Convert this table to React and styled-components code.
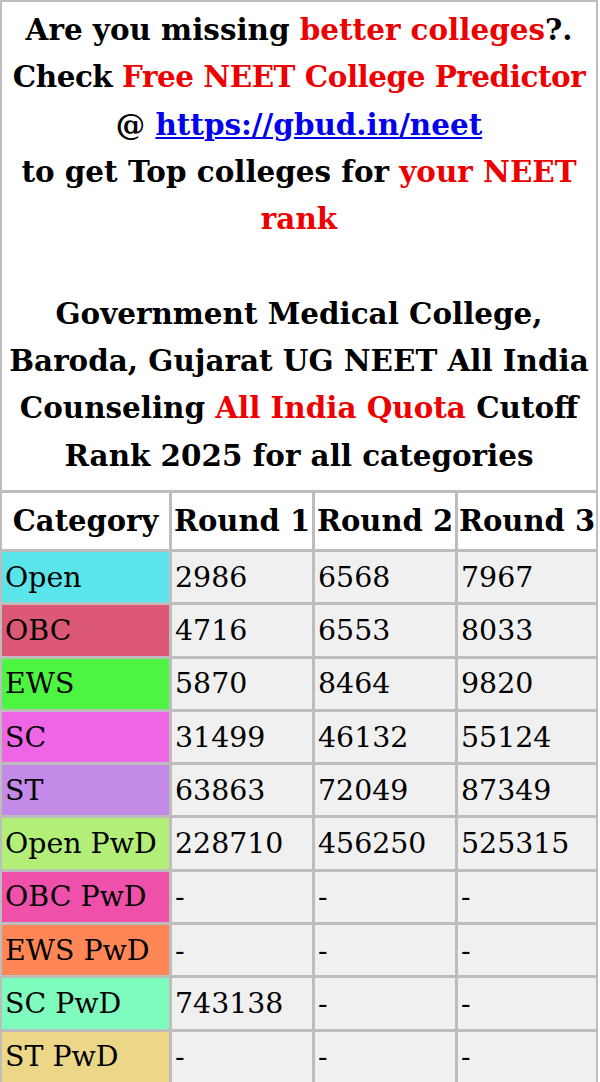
import React from 'react';
import styled, { createGlobalStyle } from 'styled-components';

const GlobalStyle = createGlobalStyle`
  html, body {
    margin: 0;
    padding: 0;
    background: #ffffff;
  }
  body {
    font-family: "DejaVu Serif", "Liberation Serif", serif;
    color: #000;
  }
`;

const Sheet = styled.div`
  width: 598px;
  box-sizing: border-box;
  padding: 2px;
  background: #bdbdbd;
  display: grid;
  grid-template-columns: 167px 140px 140px 1fr;
  gap: 3px;
`;

const Intro = styled.div`
  grid-column: 1 / -1;
  background: #fff;
  padding: 4px 5px 11px;
  text-align: center;
  font-weight: bold;
  font-size: 29.4px;
  line-height: 47.3px;
`;

const Tight = styled.span`
  white-space: nowrap;
  letter-spacing: -0.45px;
`;

const Red = styled.span`
  color: #ee0000;
`;

const Link = styled.a`
  color: #0000ee;
  text-decoration: underline;
`;

const HeadCell = styled.div`
  background: #fff;
  font-weight: bold;
  font-size: 29px;
  height: 56px;
  display: flex;
  align-items: center;
  justify-content: center;
  white-space: nowrap;
  overflow: hidden;
`;

const Cell = styled.div`
  background: ${(p) => p.$bg || '#f0f0f0'};
  font-size: 28.4px;
  height: 50.3px;
  display: flex;
  align-items: center;
  padding: 0 3px;
  white-space: nowrap;
  overflow: hidden;
`;

const rows = [
  ['Open', '#5be5ea', '2986', '6568', '7967'],
  ['OBC', '#dc5876', '4716', '6553', '8033'],
  ['EWS', '#4df542', '5870', '8464', '9820'],
  ['SC', '#ee66e6', '31499', '46132', '55124'],
  ['ST', '#c48ae8', '63863', '72049', '87349'],
  ['Open PwD', '#b2ee78', '228710', '456250', '525315'],
  ['OBC PwD', '#ee50aa', '-', '-', '-'],
  ['EWS PwD', '#ff8755', '-', '-', '-'],
  ['SC PwD', '#7dfcbe', '743138', '-', '-'],
  ['ST PwD', '#ebd787', '-', '-', '-'],
];

const App = () => (
  <>
    <GlobalStyle />
    <Sheet>
      <Intro>
        Are you missing <Red>better colleges</Red>?.
        <br />
        <Tight>
          Check <Red>Free NEET College Predictor</Red>
        </Tight>
        <br />
        @ <Link href="#">https://gbud.in/neet</Link>
        <br />
        to get Top colleges for <Red>your NEET rank</Red>
        <br />
        <br />
        Government Medical College, Baroda, Gujarat UG NEET All India Counseling{' '}
        <Red>All India Quota</Red> Cutoff Rank 2025 for all categories
      </Intro>
      <HeadCell>Category</HeadCell>
      <HeadCell>Round 1</HeadCell>
      <HeadCell>Round 2</HeadCell>
      <HeadCell>Round 3</HeadCell>
      {rows.map(([name, bg, r1, r2, r3]) => (
        <React.Fragment key={name}>
          <Cell $bg={bg}>{name}</Cell>
          <Cell>{r1}</Cell>
          <Cell>{r2}</Cell>
          <Cell>{r3}</Cell>
        </React.Fragment>
      ))}
    </Sheet>
  </>
);

export default App;
